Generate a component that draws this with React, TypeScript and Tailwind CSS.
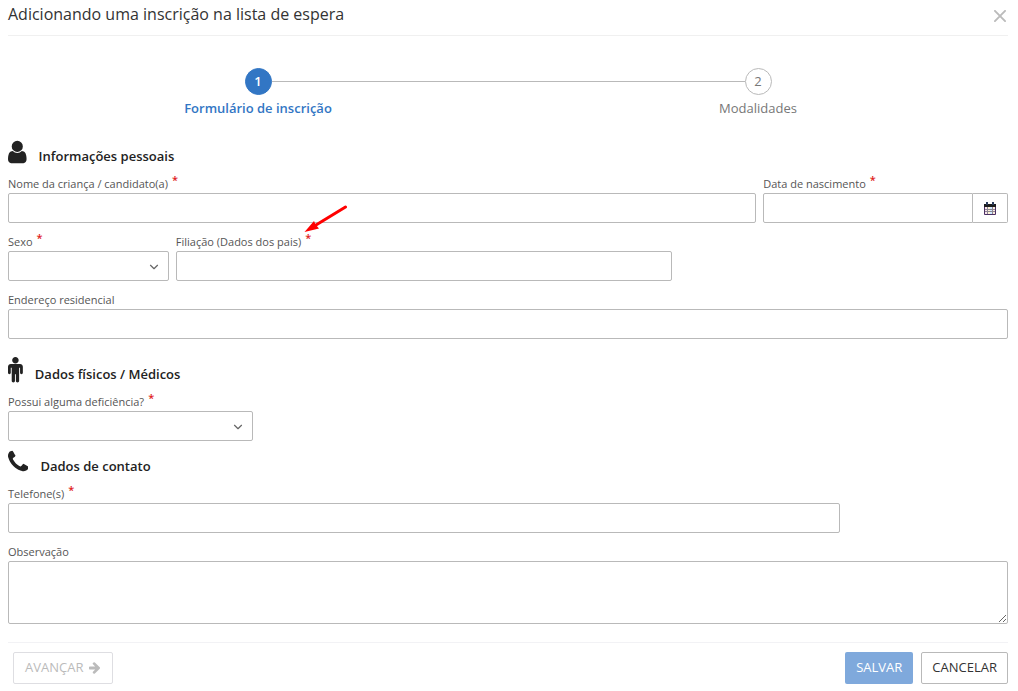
import { useState } from "react";
import type { ReactNode } from "react";
import { ChevronDown } from "lucide-react";
import clsx from "clsx";

// Shared look of every bordered control in the form
const controlClass =
  "block w-full rounded-[2px] border border-[#b9b9b9] bg-white px-2 text-xs text-[#333] outline-none focus:border-[#3276c4]";

// ── Icons ───────────────────────────────────────────────────────────

function UserIcon() {
  return (
    <svg viewBox="256 0 1280 1792" className="h-[26px] w-auto" fill="currentColor" aria-hidden="true">
      <path d="M1536 1399q0 109-62.5 187t-150.5 78h-854q-88 0-150.5-78t-62.5-187q0-85 8.5-160.5t31.5-152 58.5-131 94-89 134.5-34.5q131 128 313 128t313-128q76 0 134.5 34.5t94 89 58.5 131 31.5 152 8.5 160.5zm-256-887q0 159-112.5 271.5t-271.5 112.5-271.5-112.5-112.5-271.5 112.5-271.5 271.5-112.5 271.5 112.5 112.5 271.5z" />
    </svg>
  );
}

function PersonIcon() {
  return (
    <svg viewBox="384 -64 1024 1792" className="h-[26px] w-auto" fill="currentColor" aria-hidden="true">
      <path d="M1408 608v416q0 40-28 68t-68 28-68-28-28-68v-352h-64v912q0 46-33 79t-79 33-79-33-33-79v-464h-64v464q0 46-33 79t-79 33-79-33-33-79v-912h-64v352q0 40-28 68t-68 28-68-28-28-68v-416q0-80 56-136t136-56h640q80 0 136 56t56 136zm-288-448q0 93-65.5 158.5t-158.5 65.5-158.5-65.5-65.5-158.5 65.5-158.5 158.5-65.5 158.5 65.5 65.5 158.5z" />
    </svg>
  );
}

function PhoneIcon() {
  return (
    <svg viewBox="192 0 1408 1792" className="h-[26px] w-auto" fill="currentColor" aria-hidden="true">
      <path d="M1600 1240q0 27-10 70.5t-21 68.5q-21 50-122 106-94 51-186 51-27 0-52.5-3.5t-57.5-12.5-47.5-14.5-55.5-20.5-49-18q-98-35-175-83-128-79-264.5-215.5t-215.5-264.5q-48-77-83-175-3-9-18-49t-20.5-55.5-14.5-47.5-12.5-57.5-3.5-52.5q0-92 51-186 56-101 106-122 25-11 68.5-21t70.5-10q14 0 21 3 18 6 53 76 11 19 30 54t35 63.5 31 53.5q3 4 17.5 25t21.5 35.5 7 28.5q0 20-28.5 50t-62 55-62 53-28.5 46q0 9 5 22.5t8.5 20.5 14 24 11.5 19q76 137 174 235t235 174q2 1 19 11.5t24 14 20.5 8.5 22.5 5q18 0 46-28.5t53-62 55-62 50-28.5q14 0 28.5 7t35.5 21.5 25 17.5q25 15 53.5 31t63.5 35 54 30q70 35 76 53 3 7 3 21z" />
    </svg>
  );
}

function CalendarIcon() {
  return (
    <svg viewBox="0 0 12 13" className="h-[13px] w-3" aria-hidden="true">
      <path d="M0 2h12v11H0z" fill="#fff" />
      {/* Grid of days, with its tinted columns */}
      <path d="M1 5h2v7H1z" fill="#f9e3ec" />
      <path d="M4 5h2v7H4z" fill="#fdf1d4" />
      <path d="M6 5h2v7H6z" fill="#cfe9ff" />
      <path d="M8 5h3v7H8z" fill="#fbeade" />
      <path d="M1 7.500h10M1 9.500h10" stroke="#8d8794" strokeWidth="1" />
      <path d="M3.500 5v7M8.500 5v7" stroke="#8d8794" strokeWidth="1" />
      <path d="M0.500 4v8.500h11V4" fill="none" stroke="#4a2f63" strokeWidth="1" />
      <path d="M0 2h12v3H0z" fill="#1c1c1c" />
      <path d="M2 0h2v3H2zM8 0h2v3H8z" fill="#2b3c5c" />
    </svg>
  );
}

function ArrowRightIcon() {
  return (
    <svg viewBox="0 160 1536 1600" className="h-3 w-auto" fill="currentColor" aria-hidden="true">
      <path d="M1472 960q0 54-37 91l-651 651q-39 37-91 37-51 0-90-37l-75-75q-38-38-38-91t38-91l293-293h-704q-52 0-84.5-37.5t-32.5-90.5v-128q0-53 32.5-90.5t84.5-37.5h704l-293-294q-38-36-38-90t38-90l75-75q38-38 90-38 53 0 91 38l651 651q37 35 37 90z" />
    </svg>
  );
}

// ── Form pieces ─────────────────────────────────────────────────────

interface FieldProps {
  id: string;
  label: string;
  required?: boolean;
  className: string;
  note?: ReactNode;
  children: ReactNode;
}

// Label on top, control below. `note` is drawn over the end of the label.
function Field({ id, label, required, className, note, children }: FieldProps) {
  return (
    <div className={className}>
      <div className="flex h-5">
        <label htmlFor={id} className="relative flex gap-1 text-[11px] leading-[22px] whitespace-nowrap text-[#555]">
          {label}
          {required && <span className="text-[11px] leading-[14px] font-semibold text-[#e02020]">*</span>}
          {note}
        </label>
      </div>
      {children}
    </div>
  );
}

function SelectBox({ id, options }: { id: string; options: string[] }) {
  return (
    <div className="relative">
      <select id={id} defaultValue="" className={clsx(controlClass, "h-[30px] appearance-none")}>
        <option value=""></option>
        {options.map((option) => (
          <option key={option}>{option}</option>
        ))}
      </select>
      <ChevronDown className="pointer-events-none absolute top-[9px] right-2 size-3.5 text-[#666]" strokeWidth={2} />
    </div>
  );
}

function SectionTitle({ icon, children }: { icon: ReactNode; children: ReactNode }) {
  return (
    <div className="flex h-[34px] items-start gap-3 text-[#222]">
      {icon}
      <h2 className="pt-2 text-[13px] leading-[18px] font-semibold">{children}</h2>
    </div>
  );
}

const steps = ["Formulário de inscrição", "Modalidades"];

export default function App() {
  // Index of the wizard step being filled in
  const [step] = useState(0);

  return (
    <div className="min-h-screen bg-white pr-[10px] pl-2 font-['Open_Sans',sans-serif]">
      {/* ── Title bar ── */}
      <header className="flex h-9 items-start justify-between border-b border-[#f0f0f0]">
        <h1 className="pt-0.5 text-base leading-6 text-[#333]">Adicionando uma inscrição na lista de espera</h1>
        <button type="button" aria-label="Fechar" className="mt-2 p-0.5 text-[#bbb]">
          <svg viewBox="0 0 12 12" className="size-3" fill="none" stroke="currentColor" strokeWidth="1.9" aria-hidden="true">
            <path d="M0.300 0.300 11.700 11.700M11.700 0.300 0.300 11.700" />
          </svg>
        </button>
      </header>

      {/* ── Wizard steps ── */}
      <ol className="mt-8 flex text-[13px]">
        {steps.map((name, index) => (
          <li
            key={name}
            className={clsx(
              "flex flex-1 flex-col items-center",
              index === step ? "font-semibold text-[#3276c4]" : "text-[#777]"
            )}
          >
            {/* Each half of the connecting line belongs to the step beside it */}
            <div className="flex w-full items-center">
              <span className={clsx("h-px flex-1", index > 0 && "bg-[#b9b9b9]")} />
              <span
                className={clsx(
                  "flex size-[27px] justify-center rounded-full border leading-6",
                  index === step ? "border-[#3276c4] bg-[#3276c4] text-white" : "border-[#b9b9b9] bg-white"
                )}
              >
                {index + 1}
              </span>
              <span className={clsx("h-px flex-1", index < steps.length - 1 && "bg-[#b9b9b9]")} />
            </div>
            <span className="mt-1 leading-[18px]">{name}</span>
          </li>
        ))}
      </ol>

      <form className="pt-[22px]" onSubmit={(event) => event.preventDefault()}>
        {/* ── Personal data ── */}
        <SectionTitle icon={<UserIcon />}>Informações pessoais</SectionTitle>
        <div className="grid grid-cols-12 gap-x-[7px] gap-y-2">
          <Field id="nome" label="Nome da criança / candidato(a)" required className="col-span-9">
            <input id="nome" type="text" className={clsx(controlClass, "h-[30px]")} />
          </Field>
          <Field id="nascimento" label="Data de nascimento" required className="col-span-3">
            <div className="flex">
              <input id="nascimento" type="text" className={clsx(controlClass, "h-[30px] min-w-0 flex-1 rounded-r-none")} />
              <button
                type="button"
                aria-label="Abrir calendário"
                className="flex w-[35px] items-center justify-center rounded-r-[2px] border border-l-0 border-[#b9b9b9]"
              >
                <CalendarIcon />
              </button>
            </div>
          </Field>

          <Field id="sexo" label="Sexo" required className="col-span-2">
            <SelectBox id="sexo" options={["Feminino", "Masculino"]} />
          </Field>
          <Field
            id="filiacao"
            label="Filiação (Dados dos pais)"
            required
            className="col-span-6"
            note={
              <svg
                viewBox="0 0 44 28"
                className="pointer-events-none absolute right-[-37px] bottom-[18px] h-7 w-11"
                aria-hidden="true"
              >
                <path d="M41.500 2 12 20" stroke="#ff0000" strokeWidth="3" strokeLinecap="round" />
                <path d="M0.500 27 10 16 11.500 19.500 15 23.500z" fill="#ff0000" />
              </svg>
            }
          >
            <input id="filiacao" type="text" className={clsx(controlClass, "h-[30px]")} />
          </Field>

          <Field id="endereco" label="Endereço residencial" className="col-span-12">
            <input id="endereco" type="text" className={clsx(controlClass, "h-[30px]")} />
          </Field>
        </div>

        {/* ── Physical / medical data ── */}
        <div className="pt-[18px]">
          <SectionTitle icon={<PersonIcon />}>Dados físicos / Médicos</SectionTitle>
          <div className="grid grid-cols-12 gap-x-[7px]">
            <Field id="deficiencia" label="Possui alguma deficiência?" required className="col-span-3">
              <SelectBox id="deficiencia" options={["Sim", "Não"]} />
            </Field>
          </div>
        </div>

        {/* ── Contact data ── */}
        <div className="pt-2">
          <SectionTitle icon={<PhoneIcon />}>Dados de contato</SectionTitle>
          <div className="grid grid-cols-12 gap-x-[7px] gap-y-2">
            <Field id="telefone" label="Telefone(s)" required className="col-span-10">
              <input id="telefone" type="text" className={clsx(controlClass, "h-[30px]")} />
            </Field>
            <Field id="observacao" label="Observação" className="col-span-12">
              <textarea id="observacao" className={clsx(controlClass, "h-[63px]")} />
            </Field>
          </div>
        </div>

        {/* ── Actions ── */}
        <footer className="mt-[18px] flex justify-between border-t border-[#f2f2f5] pt-[9px] text-[13px]">
          <button
            type="button"
            disabled
            className="ml-[5px] flex h-8 items-center gap-1.5 rounded-[2px] border border-[#dedee2] px-[11px] text-[#bbb]"
          >
            AVANÇAR
            <ArrowRightIcon />
          </button>
          <div className="flex gap-2">
            <button type="submit" className="h-8 rounded-[2px] bg-[#7fa9dc] px-[11px] text-white">
              SALVAR
            </button>
            <button type="button" className="h-8 rounded-[2px] border border-[#b9b9b9] px-2.5 text-[#333]">
              CANCELAR
            </button>
          </div>
        </footer>
      </form>
    </div>
  );
}
